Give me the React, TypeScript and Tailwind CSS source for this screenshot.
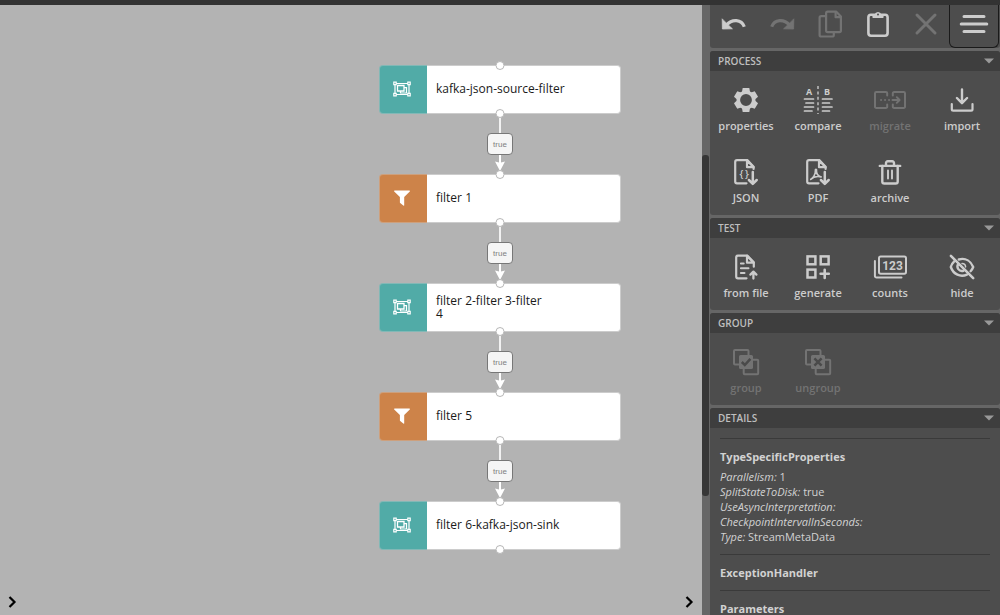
import type { ReactNode } from "react";

/* ---------- icons (32 x 32 grid) ---------- */

function Icon({ children }: { children: ReactNode }) {
  return (
    <svg
      viewBox="0 0 32 32"
      className="size-8 overflow-visible"
      fill="none"
      stroke="currentColor"
      strokeWidth="2.2"
      strokeLinecap="round"
      strokeLinejoin="round"
      aria-hidden="true"
    >
      {children}
    </svg>
  );
}

const UndoIcon = () => (
  <Icon>
    <path d="M4.2 11.2l.2 9.800 10-.2-3.300-3z" fill="currentColor" stroke="currentColor" strokeWidth=".8" />
    <path d="M8.500 17C14 10.700 23.500 11 26.300 18.800" strokeWidth="3.200" strokeLinecap="butt" />
  </Icon>
);

const RedoIcon = () => (
  <Icon>
    <path d="M27.800 11.200l-.2 9.800-10-.2 3.300-3z" fill="currentColor" stroke="currentColor" strokeWidth=".8" />
    <path d="M23.500 17C18 10.700 8.500 11 5.700 18.800" strokeWidth="3.200" strokeLinecap="butt" />
  </Icon>
);

const CopyIcon = () => (
  <Icon>
    <path d="M13.700 3.700h8.600l4.600 4.800v14a1.600 1.600 0 0 1-1.600 1.600H13.700a1.600 1.600 0 0 1-1.600-1.600V5.300a1.600 1.600 0 0 1 1.600-1.600z" />
    <path d="M21.600 4v5.200h5" />
    <path d="M12 8.200H7.200a1.600 1.600 0 0 0-1.600 1.600v17.100a1.600 1.600 0 0 0 1.600 1.600h11a1.600 1.600 0 0 0 1.600-1.600v-2.400" />
  </Icon>
);

const PasteIcon = () => (
  <Icon>
    <rect x="6.400" y="6.700" width="19.200" height="21" rx="2.600" strokeWidth="2.600" />
    <path d="M11.200 9.200V6.800h2.200a2.700 2.700 0 0 1 5.200 0h2.200v2.400z" fill="currentColor" stroke="currentColor" strokeWidth="1.600" />
    <circle cx="16" cy="6.600" r="1" fill="#4d4d4d" stroke="none" />
  </Icon>
);

const DeleteIcon = () => (
  <Icon>
    <path d="M7 7l18 18M25 7L7 25" strokeWidth="3" />
  </Icon>
);

const MenuIcon = () => (
  <Icon>
    <path d="M6 8.500h20M3.200 16h25.600M6 23.500h20" strokeWidth="3" />
  </Icon>
);

const tooth = "M12.700 4h6.600l1 5.400h-8.600z";
const PropertiesIcon = () => (
  <Icon>
    <circle cx="16" cy="16" r="7.700" strokeWidth="3.600" />
    <g fill="currentColor" stroke="none">
      <path d={tooth} />
      <path d={tooth} transform="rotate(60 16 16)" />
      <path d={tooth} transform="rotate(120 16 16)" />
      <path d={tooth} transform="rotate(180 16 16)" />
      <path d={tooth} transform="rotate(240 16 16)" />
      <path d={tooth} transform="rotate(300 16 16)" />
    </g>
  </Icon>
);

const CompareIcon = () => (
  <Icon>
    <g fill="currentColor" stroke="none" textAnchor="middle" className="font-['Open_Sans',sans-serif] text-[9px] font-bold">
      <text x="7" y="11">A</text>
      <text x="25" y="11">B</text>
    </g>
    <path d="M16 2v28" strokeWidth="1.800" strokeDasharray="3 2.400" strokeLinecap="butt" opacity=".75" />
    <path d="M2.500 15h9M4 19h7.500M2.500 23h9M2.500 27h7.500M20.500 15h9.500M20.500 19h7M20.500 23h9.500M20.500 27h7" strokeWidth="1.700" />
  </Icon>
);

const MigrateIcon = () => (
  <Icon>
    <path d="M13.200 11.500V9.300A1.300 1.300 0 0 0 11.900 8H2.300A1.300 1.300 0 0 0 1 9.300v13.400A1.300 1.300 0 0 0 2.300 24h9.600a1.300 1.300 0 0 0 1.300-1.300v-2.200" strokeWidth="2" />
    <path d="M18.800 11.500V9.300A1.300 1.300 0 0 1 20.100 8h9.600A1.300 1.300 0 0 1 31 9.300v13.400a1.300 1.300 0 0 1-1.300 1.300h-9.600a1.300 1.300 0 0 1-1.300-1.300v-2.200" strokeWidth="2" />
    <path d="M7 16h.1M11 16h.1M15 16h.1M18.500 16h6.500M22.800 13.200l2.800 2.800-2.800 2.800" strokeWidth="1.900" />
  </Icon>
);

const ImportIcon = () => (
  <Icon>
    <path d="M16 5.500v13.300M10.900 14l5.100 5.200 5.100-5.200" strokeWidth="2.400" />
    <path d="M5.800 20v5.200a1.400 1.400 0 0 0 1.400 1.400h17.900a1.400 1.400 0 0 0 1.400-1.400V20" />
  </Icon>
);

const Sheet = () => (
  <>
    <path d="M16.500 27.300H7a1.800 1.800 0 0 1-1.800-1.800V6A1.800 1.800 0 0 1 7 4.200h10.500l6.100 6.500v2.200" />
    <path d="M17 4.200v7h6.600z" />
  </>
);

const DownArrow = () => <path d="M22.800 16v11.400M18.900 24l3.900 3.900 3.900-3.900" strokeWidth="2.500" />;

const JsonIcon = () => (
  <Icon>
    <Sheet />
    <g fill="currentColor" stroke="none" textAnchor="middle" className="font-['Open_Sans',sans-serif] text-[10px] font-semibold">
      <text x="11.500" y="21.500">{"{"}</text>
      <text x="17" y="21.500">{"}"}</text>
    </g>
    <DownArrow />
  </Icon>
);

const PdfIcon = () => (
  <Icon>
    <Sheet />
    <path
      d="M8.700 23.400c2.800-1.400 4.900-5.600 4.700-9.200-.1-1.200 1.200-1.200 1.100 0-.3 3.200 1.500 5.700 4.600 6.700M8.700 23.400c2.600-2.500 6.600-3.300 10.400-2.500"
      strokeWidth="1.600"
    />
    <DownArrow />
  </Icon>
);

const ArchiveIcon = () => (
  <Icon>
    <path d="M5.800 9.900h20.400" strokeWidth="2.400" />
    <path d="M12 9.500V7a1.700 1.700 0 0 1 1.700-1.700h4.600A1.700 1.700 0 0 1 20 7v2.500" strokeWidth="2.400" />
    <path d="M8.300 10v15.400a2.100 2.100 0 0 0 2.100 2.100h11.200a2.100 2.100 0 0 0 2.100-2.100V10" strokeWidth="2.400" />
    <path d="M14 14.500v8M18 14.500v8" strokeWidth="1.900" />
  </Icon>
);

const FromFileIcon = () => (
  <Icon>
    <path d="M16.500 27.300H8a1.800 1.800 0 0 1-1.800-1.800V6.500A1.800 1.800 0 0 1 8 4.700h9.500l6.300 6.500v4.500" />
    <path d="M17 4.700v7h6.600z" />
    <path d="M10.900 12.500h2.800M10.900 17.200h7.600M10.900 21.900h3.600" strokeWidth="2" />
    <path d="M23.400 27.600V21M20.400 23.600l3-3 3 3" strokeWidth="2.300" />
  </Icon>
);

const GenerateIcon = () => (
  <Icon>
    <g strokeWidth="2.500" strokeLinejoin="miter">
      <rect x="5.500" y="5.400" width="7.900" height="7.900" />
      <rect x="18.700" y="5.400" width="7.900" height="7.900" />
      <rect x="5.500" y="18.600" width="7.900" height="7.900" />
      <path d="M22.700 18.700v8.200M18.600 22.800h8.200" strokeWidth="2.600" />
    </g>
  </Icon>
);

const CountsIcon = () => (
  <Icon>
    <rect x="5" y="5.500" width="27" height="17.200" rx="1.700" strokeWidth="2" />
    <path d="M.9 10v14.900a1.700 1.700 0 0 0 1.700 1.700H27.500" strokeWidth="2" />
    <text
      x="18.500"
      y="18.600"
      textAnchor="middle"
      fill="currentColor"
      stroke="none"
      className="font-[Roboto,sans-serif] text-[12px] font-bold"
    >
      123
    </text>
  </Icon>
);

const HideIcon = () => (
  <Icon>
    <path d="M4.900 4.900l22.300 22.300" strokeWidth="2.600" />
    <path d="M12.800 8.500C20 6.500 25 10.500 27.200 16c-.6 1.600-1.500 3-2.600 4.200" strokeWidth="2.400" />
    <path d="M8.200 10.300C6.500 11.900 5.300 13.900 4.800 16c2.600 7.500 9.700 10.500 16.200 7.600" strokeWidth="2.400" />
    <path d="M12.200 13c-2.200 3.500.8 7.900 5.200 6.800" strokeWidth="2.400" />
    <path d="M16 12.500c2 0 3.500 1.500 3.600 3.400" strokeWidth="1.500" />
  </Icon>
);

const Squares = ({ children }: { children: ReactNode }) => (
  <Icon>
    <rect x="4" y="4" width="14.500" height="14.500" rx="1" strokeWidth="2" />
    <rect x="13.700" y="13.700" width="14.500" height="14.500" rx="1" strokeWidth="2" />
    <rect x="9" y="9" width="14" height="14" rx="1.600" fill="currentColor" stroke="none" />
    <g stroke="#4a4a4a" strokeWidth="2.500" strokeLinecap="butt" strokeLinejoin="miter">
      {children}
    </g>
  </Icon>
);

const GroupIcon = () => (
  <Squares>
    <path d="M11.800 16l3 3 5.600-6.200" />
  </Squares>
);

const UngroupIcon = () => (
  <Squares>
    <path d="M12.400 12.400l7.200 7.200M19.600 12.400l-7.200 7.200" />
  </Squares>
);

/* ---------- diagram ---------- */

const FragmentIcon = () => (
  <svg viewBox="0 0 18 16" className="h-4 w-[18px]" fill="none" stroke="white" aria-hidden="true">
    <path d="M2 2.500h14v11H2z" strokeWidth="1.200" />
    <path d="M4.500 4.500h6.500v5.500H4.500z" strokeWidth="1.300" />
    <path d="M11 6.700h2.500v5.300H7.500V10" strokeWidth="1.200" />
    <g fill="#51aba7" strokeWidth="1.200">
      <path d="M.8 1.200h2.400v2.400H.8zM14.800 1.200h2.400v2.400h-2.400zM.8 12.400h2.400v2.400H.8zM14.800 12.400h2.400v2.400h-2.400z" />
    </g>
  </svg>
);

const FilterIcon = () => (
  <svg viewBox="0 0 16 16" className="size-4" fill="white" aria-hidden="true">
    <path d="M.6.500h14.800c.5 0 .7.600.4.900L10.200 7v8.200c0 .5-.5.700-.9.400L6.200 13c-.2-.1-.3-.3-.3-.5V7L.2 1.400C-.1 1.100.1.500.6.500z" />
  </svg>
);

interface DiagramNodeData {
  name: string;
  kind: "fragment" | "filter";
  place: string;
}

const nodes: DiagramNodeData[] = [
  { name: "kafka-json-source-filter", kind: "fragment", place: "top-[60px]" },
  { name: "filter 1", kind: "filter", place: "top-[169px]" },
  { name: "filter 2-filter 3-filter\n4", kind: "fragment", place: "top-[278px]" },
  { name: "filter 5", kind: "filter", place: "top-[387px]" },
  { name: "filter 6-kafka-json-sink", kind: "fragment", place: "top-[496px]" },
];

const Port = ({ place }: { place: string }) => (
  <span className={`absolute left-1/2 z-10 size-[9px] -translate-x-1/2 rounded-full border border-[#b8b8b8] bg-white ${place}`} />
);

function DiagramNode({ name, kind, place, linked }: DiagramNodeData & { linked: boolean }) {
  return (
    <div className={`absolute left-[379px] w-[242px] ${place}`}>
      <div className="flex h-[49px]">
        <div
          className={`flex w-12 shrink-0 items-center justify-center rounded-l-[4px] border-y border-l border-[#cccccc]/40 pr-1 pb-0.5 ${kind === "fragment" ? "bg-[#51aba7]" : "bg-[#cd8349]"}`}
        >
          {kind === "fragment" ? <FragmentIcon /> : <FilterIcon />}
        </div>
        <div className="flex min-w-0 flex-1 items-center rounded-r-[4px] border-y border-r border-[#cccccc] bg-white pb-0.5 pl-[9px] text-[12px] leading-[13px] whitespace-pre text-[#1a1a1a]">
          {name}
        </div>
      </div>
      <Port place="-top-1" />
      <Port place="top-11" />
      {linked && (
        <div className="absolute top-[49px] left-1/2 flex h-[60px] w-[26px] -translate-x-1/2 flex-col items-center">
          <span className="h-[19px] w-0.5 bg-[#f2f2f2]" />
          <span className="flex h-[22px] w-[26px] items-center justify-center rounded-[4px] border border-[#777777] bg-[#f5f5f5] pt-0.5 font-['Liberation_Sans',sans-serif] text-[8px] text-[#808080]">
            true
          </span>
          <svg viewBox="0 0 10 16" className="h-4 w-2.5" fill="white" aria-hidden="true">
            <path d="M4 0h2v7.500l4-1L5 16 0 6.500l4 1z" />
          </svg>
        </div>
      )}
    </div>
  );
}

function PanelToggle({ label, place }: { label: string; place: string }) {
  return (
    <button type="button" aria-label={label} className={`absolute bottom-[5px] flex size-4 items-center justify-center ${place}`}>
      <svg viewBox="0 0 16 16" className="size-4" fill="none" stroke="black" strokeWidth="2.200" aria-hidden="true">
        <path d="M5.500 3l5 5-5 5" />
      </svg>
    </button>
  );
}

/* ---------- sidebar ---------- */

function ToolbarButton({ label, disabled, children }: { label: string; disabled?: boolean; children: ReactNode }) {
  return (
    <button
      type="button"
      aria-label={label}
      disabled={disabled}
      className="flex h-[38px] w-12 items-center justify-center text-[#cccccc] disabled:text-[#737373]"
    >
      {children}
    </button>
  );
}

function Panel({ title, children }: { title: string; children: ReactNode }) {
  return (
    <section className="shrink-0 overflow-hidden rounded-[3px] bg-[#4d4d4d]">
      <h2>
        <button
          type="button"
          aria-expanded="true"
          className="flex h-5 w-full items-center justify-between bg-[#3e3e3e] pr-1.5 pl-2 text-[10px] font-semibold text-[#bfbfbf]"
        >
          {title}
          <svg viewBox="0 0 10 6" className="h-1.5 w-2.5" fill="#999999" aria-hidden="true">
            <path d="M0 .5h10L5 5.500z" />
          </svg>
        </button>
      </h2>
      {children}
    </section>
  );
}

function Tool({ label, disabled, children }: { label: string; disabled?: boolean; children: ReactNode }) {
  return (
    <button
      type="button"
      disabled={disabled}
      className="flex h-[72px] w-[72px] flex-col items-center gap-0.5 pt-[13px] text-[#cccccc] disabled:text-[#737373]"
    >
      {children}
      <span className="text-[11px] leading-4 font-semibold">{label}</span>
    </button>
  );
}

const Tools = ({ children }: { children: ReactNode }) => <div className="flex flex-wrap">{children}</div>;

const properties = [
  { name: "Parallelism", value: "1" },
  { name: "SplitStateToDisk", value: "true" },
  { name: "UseAsyncInterpretation", value: "" },
  { name: "CheckpointIntervalInSeconds", value: "" },
  { name: "Type", value: "StreamMetaData" },
];

function Detail({ title, children }: { title: string; children?: ReactNode }) {
  return (
    <div className="border-t border-[#3a3a3a] py-[11px]">
      <h3 className="text-[11px] leading-[13px] font-bold">{title}</h3>
      {children}
    </div>
  );
}

export default function App() {
  return (
    <div className="flex h-screen flex-col overflow-hidden bg-[#b3b3b3] font-['Open_Sans',sans-serif]">
      <header className="h-[5px] shrink-0 bg-[#333333]" />
      <div className="flex min-h-0 flex-1">
        <main className="relative min-w-0 flex-1 overflow-hidden">
          {nodes.map((node, i) => (
            <DiagramNode key={node.name} {...node} linked={i < nodes.length - 1} />
          ))}
          <PanelToggle label="Open left panel" place="left-1" />
          <PanelToggle label="Close right panel" place="right-[5px]" />
        </main>

        <aside className="flex w-[298px] shrink-0 overflow-hidden bg-[#666666]">
          <div className="w-2 shrink-0 pt-[150px]">
            <div className="h-[341px] w-[7px] rounded-[3px] bg-[#363636]" />
          </div>
          <div className="flex min-w-0 flex-1 flex-col gap-[3px] overflow-y-auto [scrollbar-width:none]">
            <div className="flex h-[43px] shrink-0 rounded-b-[3px] bg-[#4d4d4d]">
              <ToolbarButton label="Undo"><UndoIcon /></ToolbarButton>
              <ToolbarButton label="Redo" disabled><RedoIcon /></ToolbarButton>
              <ToolbarButton label="Copy" disabled><CopyIcon /></ToolbarButton>
              <ToolbarButton label="Paste"><PasteIcon /></ToolbarButton>
              <ToolbarButton label="Delete" disabled><DeleteIcon /></ToolbarButton>
              <button
                type="button"
                aria-label="Menu"
                className="-ml-px flex w-[50px] justify-center rounded-b-[6px] border-x border-b border-[#1a1a1a] pt-[3px] text-[#cccccc]"
              >
                <MenuIcon />
              </button>
            </div>

            <Panel title="PROCESS">
              <Tools>
                <Tool label="properties"><PropertiesIcon /></Tool>
                <Tool label="compare"><CompareIcon /></Tool>
                <Tool label="migrate" disabled><MigrateIcon /></Tool>
                <Tool label="import"><ImportIcon /></Tool>
                <Tool label="JSON"><JsonIcon /></Tool>
                <Tool label="PDF"><PdfIcon /></Tool>
                <Tool label="archive"><ArchiveIcon /></Tool>
              </Tools>
            </Panel>

            <Panel title="TEST">
              <Tools>
                <Tool label="from file"><FromFileIcon /></Tool>
                <Tool label="generate"><GenerateIcon /></Tool>
                <Tool label="counts"><CountsIcon /></Tool>
                <Tool label="hide"><HideIcon /></Tool>
              </Tools>
            </Panel>

            <Panel title="GROUP">
              <Tools>
                <Tool label="group" disabled><GroupIcon /></Tool>
                <Tool label="ungroup" disabled><UngroupIcon /></Tool>
              </Tools>
            </Panel>

            <Panel title="DETAILS">
              <div className="p-2.5 text-[#d2d2d2]">
                <Detail title="TypeSpecificProperties">
                  <ul className="mt-1.5 -mb-px text-[11px] leading-[15px]">
                    {properties.map(({ name, value }) => (
                      <li key={name}>
                        <em>{name}:</em> {value}
                      </li>
                    ))}
                  </ul>
                </Detail>
                <Detail title="ExceptionHandler" />
                <Detail title="Parameters" />
              </div>
            </Panel>
          </div>
        </aside>
      </div>
    </div>
  );
}
